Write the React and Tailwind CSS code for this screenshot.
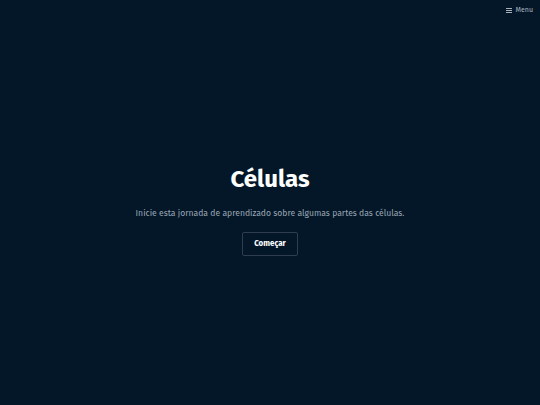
import React from "react";

export default function App() {
  return (
    <div className="w-[540px] h-[405px] bg-[#031729] flex flex-col text-white" style={{ fontFamily: '"Fira Sans", "Noto Sans", "Open Sans", sans-serif' }}>
      <div className="flex justify-end items-center h-[20px] pr-[7px]">
        <div className="flex items-center gap-[4px] text-[7px] text-[#a9b2bb]">
          <svg width="6" height="5" viewBox="0 0 6 5" fill="#a9b2bb">
            <rect x="0" y="0" width="6" height="1" />
            <rect x="0" y="2" width="6" height="1" />
            <rect x="0" y="4" width="6" height="1" />
          </svg>
          <span>Menu</span>
        </div>
      </div>
      <div className="flex-1 flex flex-col items-center justify-center pb-[2px]">
        <h1 className="text-[24px] font-bold leading-none">Células</h1>
        <p className="mt-[16px] text-[8.6px] text-[#9aa6b2]">Inicie esta jornada de aprendizado sobre algumas partes das células.</p>
        <button className="mt-[13px] w-[56px] h-[24px] border border-[#2e3e4e] rounded-[2px] text-[8px] font-bold text-white">Começar</button>
      </div>
    </div>
  );
}
